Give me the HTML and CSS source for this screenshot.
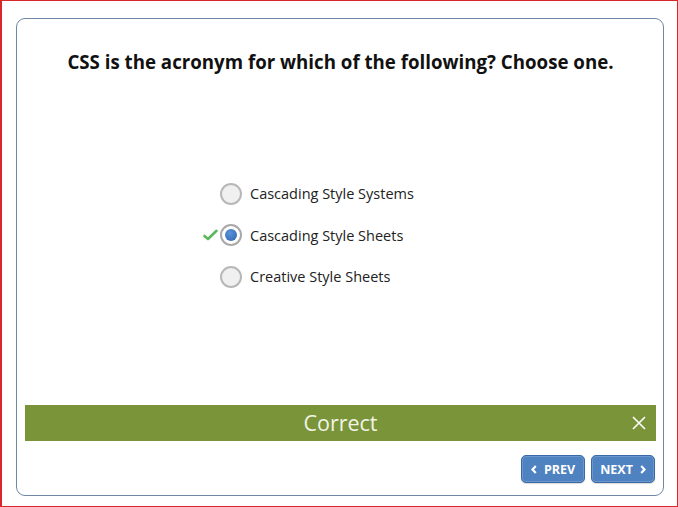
FILE: index.html
```html
<!DOCTYPE html>
<html>
<head>
<meta charset="utf-8">
<link rel="stylesheet" href="styles.css">
</head>
<body>
<div class="frame">
  <div class="card">
    <h1 class="question">CSS is the acronym for which of the following? Choose one.</h1>
    <div class="options">
      <div class="option">
        <span class="radio"></span>
        <span class="label">Cascading Style Systems</span>
      </div>
      <div class="option">
        <svg class="check" width="15" height="12" viewBox="0 0 15 12"><path d="M1.5 7 L5 10 L13.5 1.8" fill="none" stroke="#5cb85c" stroke-width="2.6" stroke-linecap="round" stroke-linejoin="round"/></svg>
        <span class="radio selected"><span class="dot"></span></span>
        <span class="label">Cascading Style Sheets</span>
      </div>
      <div class="option">
        <span class="radio"></span>
        <span class="label">Creative Style Sheets</span>
      </div>
    </div>
    <div class="feedback">
      <span class="feedback-text">Correct</span>
      <svg class="close" width="14" height="14" viewBox="0 0 14 14"><path d="M1 1 L13 13 M13 1 L1 13" stroke="#fff" stroke-width="1.6"/></svg>
    </div>
    <div class="nav">
      <button class="btn"><svg class="chev" width="6" height="9" viewBox="0 0 6 9"><path d="M4.8 1 L1.5 4.5 L4.8 8" fill="none" stroke="#fff" stroke-width="2.2"/></svg>PREV</button>
      <button class="btn">NEXT<svg class="chev" width="6" height="9" viewBox="0 0 6 9"><path d="M1.2 1 L4.5 4.5 L1.2 8" fill="none" stroke="#fff" stroke-width="2.2"/></svg></button>
    </div>
  </div>
</div>
</body>
</html>
```

FILE: styles.css
```css
* { box-sizing: border-box; }
html, body { margin: 0; padding: 0; background: #fff; }
body { font-family: "Open Sans", "Noto Sans", sans-serif; }
.frame {
  width: 678px;
  height: 507px;
  border: 1px solid #d9262a;
  border-left-width: 2px;
  padding: 17px 14px 10px 14px;
}
.card {
  height: 478px;
  width: 648px;
  border: 1px solid #6f88a6;
  border-radius: 9px;
  display: flex;
  flex-direction: column;
  padding: 0 7px 12px 8px;
}
.question {
  margin: 0;
  padding-top: 31px;
  font-size: 18.7px;
  line-height: 24px;
  font-weight: 700;
  text-align: center;
  color: #111;
}
.options {
  flex: 1;
  display: flex;
  flex-direction: column;
  padding-top: 99px;
  padding-left: 195px;
}
.option {
  position: relative;
  display: flex;
  align-items: center;
  height: 41.5px;
  font-size: 14.5px;
  color: #222;
}
.radio {
  width: 22px;
  height: 22px;
  border-radius: 50%;
  border: 2px solid #b8b8b8;
  background: #f0f0f0;
  display: flex;
  align-items: center;
  justify-content: center;
  margin-right: 8px;
}
.radio.selected { border-color: #a9a9a9; background: #fff; }
.dot {
  width: 12px;
  height: 12px;
  border-radius: 50%;
  background: radial-gradient(circle at 40% 35%, #5a93d8, #2d64b0);
}
.check {
  position: absolute;
  left: -17px;
  top: 14px;
}
.feedback {
  position: relative;
  height: 36px;
  background: #7a943a;
  display: flex;
  align-items: center;
  justify-content: center;
}
.feedback-text {
  color: #f3f3e6;
  font-size: 21.5px;
  line-height: 26px;
}
.close {
  position: absolute;
  right: 10px;
  top: 11px;
}
.nav {
  display: flex;
  justify-content: flex-end;
  gap: 6px;
  padding-top: 14px;
  padding-right: 1px;
}
.btn {
  height: 28px;
  width: 64px;
  border: 1px solid #3a6aa6;
  border-radius: 5px;
  background: #4f82c0;
  box-shadow: inset 0 0 0 1px #6b97cc, 0 1px 1px rgba(0,0,0,0.15);
  color: #fff;
  font-family: "Open Sans", sans-serif;
  font-weight: 700;
  font-size: 12.5px;
  padding: 0;
  display: flex;
  align-items: center;
  justify-content: center;
  gap: 7px;
}
.chev { display: block; }
```
